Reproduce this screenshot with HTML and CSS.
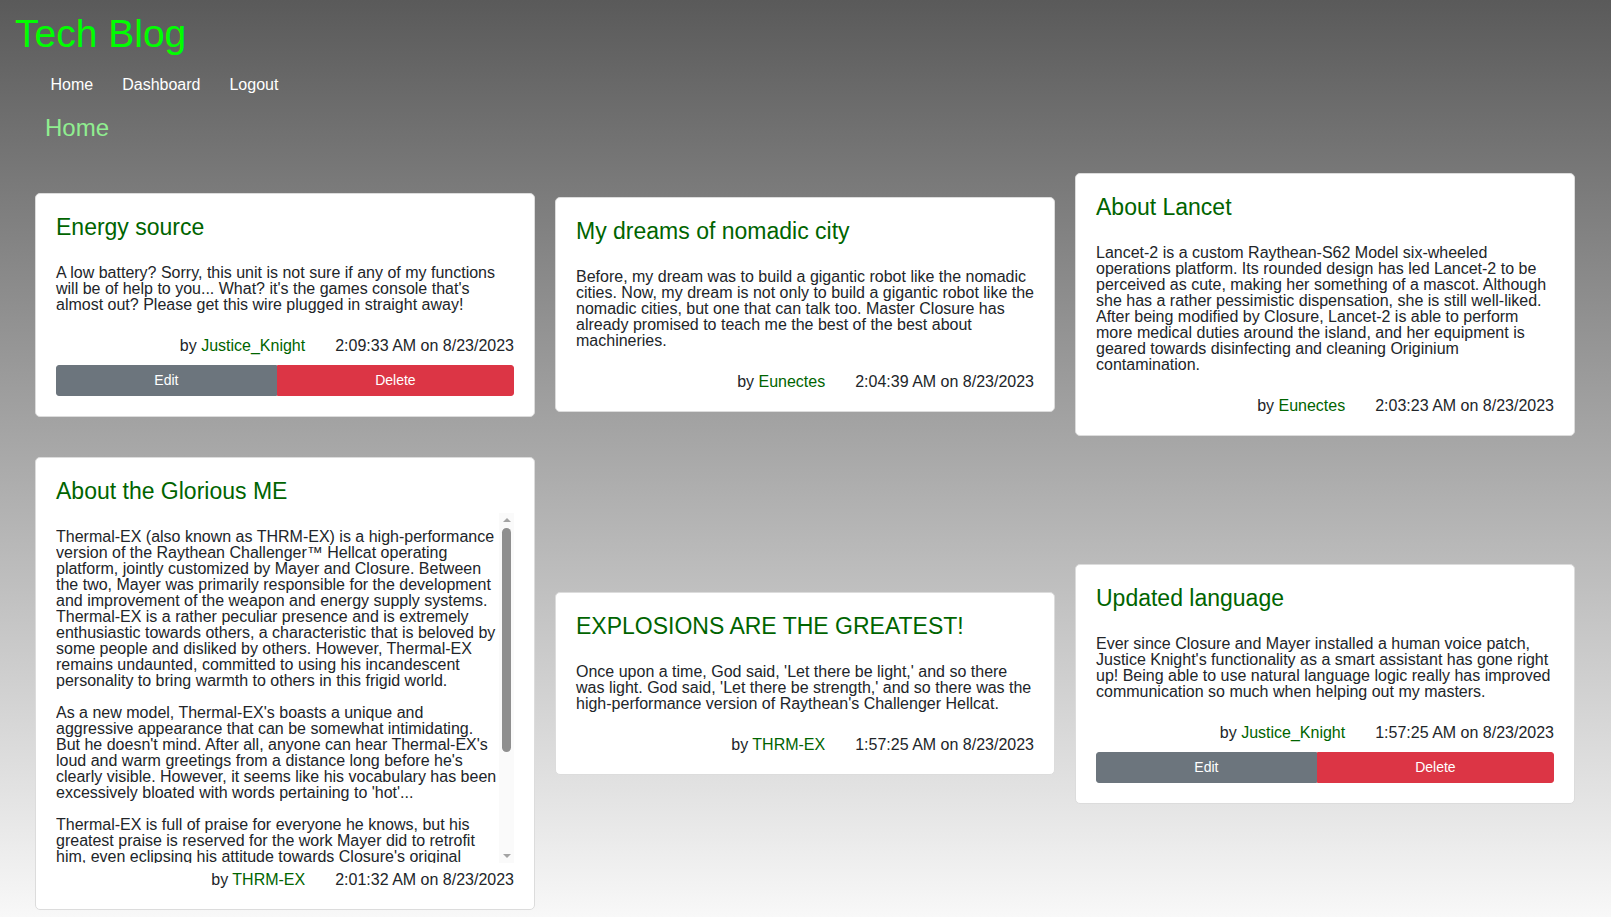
FILE: index.html
```html
<!DOCTYPE html>
<html lang="en">
<head>
<meta charset="utf-8">
<title>Tech Blog</title>
<link rel="stylesheet" href="styles.css">
</head>
<body>
<header class="site-header">
  <h1 class="brand">Tech Blog</h1>
  <nav class="nav">
    <a class="nav-link" href="#">Home</a>
    <a class="nav-link" href="#">Dashboard</a>
    <a class="nav-link" href="#">Logout</a>
  </nav>
  <h2 class="page-title">Home</h2>
</header>
<main class="posts">
  <article class="card">
    <h3 class="card-title">Energy source</h3>
    <div class="card-body">
      <p>A low battery? Sorry, this unit is not sure if any of my functions will be of help to you... What? it's the games console that's almost out? Please get this wire plugged in straight away!</p>
    </div>
    <div class="byline"><span>by <span class="author">Justice_Knight</span></span><span>2:09:33 AM on 8/23/2023</span></div>
    <div class="btn-group"><button class="btn btn-edit">Edit</button><button class="btn btn-delete">Delete</button></div>
  </article>
  <article class="card">
    <h3 class="card-title">My dreams of nomadic city</h3>
    <div class="card-body">
      <p>Before, my dream was to build a gigantic robot like the nomadic cities. Now, my dream is not only to build a gigantic robot like the nomadic cities, but one that can talk too. Master Closure has already promised to teach me the best of the best about machineries.</p>
    </div>
    <div class="byline"><span>by <span class="author">Eunectes</span></span><span>2:04:39 AM on 8/23/2023</span></div>
  </article>
  <article class="card">
    <h3 class="card-title">About Lancet</h3>
    <div class="card-body">
      <p>Lancet-2 is a custom Raythean-S62 Model six-wheeled operations platform. Its rounded design has led Lancet-2 to be perceived as cute, making her something of a mascot. Although she has a rather pessimistic dispensation, she is still well-liked. After being modified by Closure, Lancet-2 is able to perform more medical duties around the island, and her equipment is geared towards disinfecting and cleaning Originium contamination.</p>
    </div>
    <div class="byline"><span>by <span class="author">Eunectes</span></span><span>2:03:23 AM on 8/23/2023</span></div>
  </article>
  <article class="card">
    <h3 class="card-title">About the Glorious ME</h3>
    <div class="scroll-box">
      <div class="card-body scroll-content">
        <p>Thermal-EX (also known as THRM-EX) is a high-performance version of the Raythean Challenger™ Hellcat operating platform, jointly customized by Mayer and Closure. Between the two, Mayer was primarily responsible for the development and improvement of the weapon and energy supply systems. Thermal-EX is a rather peculiar presence and is extremely enthusiastic towards others, a characteristic that is beloved by some people and disliked by others. However, Thermal-EX remains undaunted, committed to using his incandescent personality to bring warmth to others in this frigid world.</p>
        <p>As a new model, Thermal-EX's boasts a unique and aggressive appearance that can be somewhat intimidating. But he doesn't mind. After all, anyone can hear Thermal-EX's loud and warm greetings from a distance long before he's clearly visible. However, it seems like his vocabulary has been excessively bloated with words pertaining to 'hot'...</p>
        <p>Thermal-EX is full of praise for everyone he knows, but his greatest praise is reserved for the work Mayer did to retrofit him, even eclipsing his attitude towards Closure's original</p>
      </div>
      <div class="scrollbar" aria-hidden="true">
        <span class="sb-button"><span class="sb-arrow-up"></span></span>
        <span class="sb-track"><span class="sb-thumb"></span></span>
        <span class="sb-button"><span class="sb-arrow-down"></span></span>
      </div>
    </div>
    <div class="byline"><span>by <span class="author">THRM-EX</span></span><span>2:01:32 AM on 8/23/2023</span></div>
  </article>
  <article class="card">
    <h3 class="card-title">EXPLOSIONS ARE THE GREATEST!</h3>
    <div class="card-body">
      <p>Once upon a time, God said, 'Let there be light,' and so there was light. God said, 'Let there be strength,' and so there was the high-performance version of Raythean's Challenger Hellcat.</p>
    </div>
    <div class="byline"><span>by <span class="author">THRM-EX</span></span><span>1:57:25 AM on 8/23/2023</span></div>
  </article>
  <article class="card">
    <h3 class="card-title">Updated language</h3>
    <div class="card-body">
      <p>Ever since Closure and Mayer installed a human voice patch, Justice Knight's functionality as a smart assistant has gone right up! Being able to use natural language logic really has improved communication so much when helping out my masters.</p>
    </div>
    <div class="byline"><span>by <span class="author">Justice_Knight</span></span><span>1:57:25 AM on 8/23/2023</span></div>
    <div class="btn-group"><button class="btn btn-edit">Edit</button><button class="btn btn-delete">Delete</button></div>
  </article>
</main>
</body>
</html>
```

FILE: styles.css
```css
html {
  min-height: 100%;
  background: linear-gradient(to bottom, #5a5a5a 0%, #f8f8f8 100%);
}

body {
  margin: 0;
  font-family: "Liberation Sans", Arial, sans-serif;
  color: #212529;
}

.site-header {
  display: flex;
  flex-direction: column;
  align-items: flex-start;
}

.brand {
  margin: 0;
  padding: 12px 15px 0;
  font-size: 39px;
  font-weight: normal;
  line-height: normal;
  color: #00ff00;
}

.nav {
  display: flex;
  margin-top: 20px;
  padding-left: 36px;
}

.nav-link {
  padding: 0 14.5px;
  font-size: 16px;
  line-height: normal;
  color: #ffffff;
  text-decoration: none;
}

.page-title {
  margin: 20px 0 0 45px;
  font-size: 24px;
  font-weight: normal;
  line-height: normal;
  color: #90ee90;
}

.posts {
  display: grid;
  grid-template-columns: repeat(3, 500px);
  column-gap: 20px;
  row-gap: 21px;
  align-items: center;
  margin-top: 31px;
  padding-left: 35px;
}

.card {
  display: flex;
  flex-direction: column;
  background: #ffffff;
  border: 1px solid #dcdcdc;
  border-radius: 5px;
  padding: 20px;
}

.card-title {
  margin: 0 0 8px;
  font-size: 23px;
  font-weight: normal;
  line-height: normal;
  color: #006400;
}

.card-body {
  display: flow-root;
  font-size: 16px;
  line-height: 16px;
}

.card-body p {
  margin: 16px 0;
}

.scroll-box {
  display: flex;
  height: 350px;
}

.scroll-content {
  flex: 1 1 auto;
  min-width: 0;
  overflow: hidden;
}

.scrollbar {
  flex: 0 0 15px;
  display: flex;
  flex-direction: column;
  background: #fafafa;
}

.sb-button {
  flex: 0 0 14px;
  display: flex;
  align-items: center;
  justify-content: center;
}

.sb-arrow-up {
  width: 0;
  height: 0;
  border-left: 4px solid transparent;
  border-right: 4px solid transparent;
  border-bottom: 4px solid #a3a3a3;
}

.sb-arrow-down {
  width: 0;
  height: 0;
  border-left: 4px solid transparent;
  border-right: 4px solid transparent;
  border-top: 4px solid #a3a3a3;
}

.sb-track {
  flex: 1 1 auto;
  display: flex;
  flex-direction: column;
  align-items: center;
  padding-top: 1px;
}

.sb-thumb {
  width: 9px;
  height: 224px;
  border-radius: 5px;
  background: #8f8f8f;
}

.byline {
  display: flex;
  justify-content: flex-end;
  gap: 30px;
  margin-top: 8px;
  font-size: 16px;
  line-height: normal;
}

.author {
  color: #006400;
}

.btn-group {
  display: flex;
  margin-top: 10px;
}

.btn {
  flex: 1 1 auto;
  padding: 4px 8px;
  border: 1px solid transparent;
  font-family: "Liberation Sans", Arial, sans-serif;
  font-size: 14px;
  line-height: 21px;
  color: #ffffff;
  cursor: pointer;
}

.btn-edit {
  background: #6c757d;
  border-color: #6c757d;
  border-radius: 3px 0 0 3px;
}

.btn-delete {
  background: #dc3545;
  border-color: #dc3545;
  border-radius: 0 3px 3px 0;
}
```
